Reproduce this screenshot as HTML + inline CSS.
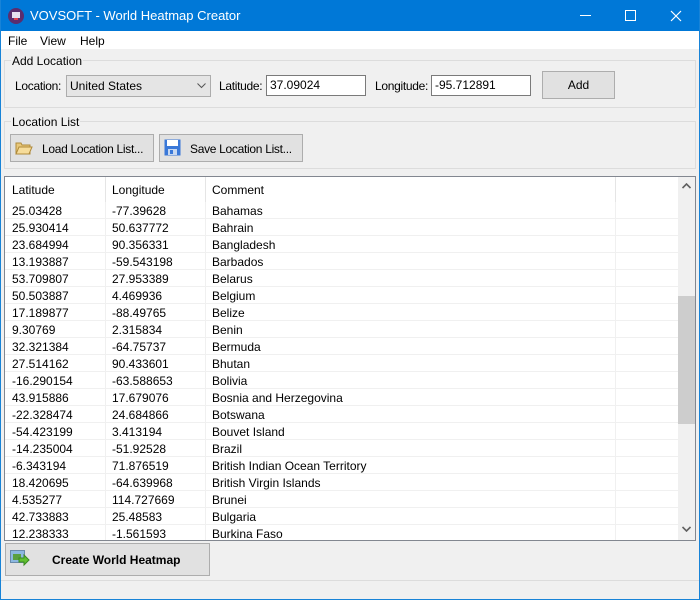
<!DOCTYPE html>
<html><head><meta charset="utf-8"><style>
*{box-sizing:border-box;margin:0;padding:0}
body{width:700px;height:600px;overflow:hidden;background:#f0f0f0;font-family:"Liberation Sans",sans-serif;font-size:12px;color:#000;position:relative}
.abs{position:absolute}
#win{position:absolute;left:0;top:0;width:700px;height:600px;border:1px solid #1883d7;border-top:none}
#title{left:0;top:0;width:700px;height:31px;background:#0078d7;color:#fff;font-size:13px}
#menu{left:1px;top:31px;width:698px;height:18px;background:#fff;font-size:12px}
.grp{border:1px solid #dcdcdc;}
.btn{background:#e1e1e1;border:1px solid #adadad;text-align:center}
.in{background:#fff;border:1px solid #7a7a7a;padding-left:3px;line-height:19px}
#list{left:4px;top:176px;width:692px;height:365px;background:#fff;border:1px solid #828790;overflow:hidden}
.row{position:absolute;left:0;height:17px;width:673px;border-bottom:1px solid #f0f0f0;line-height:18px}
.row span{position:absolute;top:0}
.c1{left:7px}.c2{left:107px}.c3{left:207px}
.vl{position:absolute;width:1px;background:#f0f0f0}
.tight{letter-spacing:-0.3px}
</style></head><body>
<div id="title" class="abs">
 <svg class="abs" style="left:8px;top:8px" width="16" height="16"><circle cx="8" cy="8" r="8" fill="#5b2d6e"/><rect x="4" y="4" width="8" height="6" fill="#e8e0f0"/><rect x="6" y="10" width="4" height="2" fill="#e04050"/></svg>
 <span class="abs" style="left:30px;top:8px">VOVSOFT - World Heatmap Creator</span>
 <div class="abs" style="left:580px;top:15px;width:11px;height:1px;background:#fff"></div>
 <div class="abs" style="left:625px;top:10px;width:11px;height:11px;border:1px solid #fff"></div>
 <svg class="abs" style="left:670px;top:10px" width="12" height="12"><path d="M1 1L11 11M11 1L1 11" stroke="#fff" stroke-width="1.2"/></svg>
</div>
<div id="menu" class="abs"><span class="abs" style="left:7px;top:3px">File</span><span class="abs" style="left:39px;top:3px">View</span><span class="abs" style="left:79px;top:3px">Help</span></div>

<div class="abs grp" style="left:4px;top:60px;width:692px;height:48px"></div>
<span class="abs" style="left:11px;top:54px;background:#f0f0f0;padding:0 1px">Add Location</span>
<span class="abs tight" style="left:15px;top:79px">Location:</span>
<div class="abs" style="left:66px;top:75px;width:145px;height:22px;background:#e5e5e5;border:1px solid #acacac;line-height:20px;padding-left:3px">United States
 <svg class="abs" style="left:130px;top:7px" width="9" height="6"><path d="M0.5 0.5L4.5 4.5L8.5 0.5" stroke="#555" fill="none"/></svg></div>
<span class="abs tight" style="left:219px;top:79px">Latitude:</span>
<div class="abs in" style="left:266px;top:75px;width:100px;height:21px">37.09024</div>
<span class="abs tight" style="left:375px;top:79px">Longitude:</span>
<div class="abs in" style="left:431px;top:75px;width:100px;height:21px">-95.712891</div>
<div class="abs btn" style="left:542px;top:71px;width:73px;height:28px;line-height:26px">Add</div>

<div class="abs grp" style="left:4px;top:121px;width:692px;height:48px"></div>
<span class="abs" style="left:11px;top:115px;background:#f0f0f0;padding:0 1px">Location List</span>
<div class="abs btn" style="left:10px;top:134px;width:144px;height:28px"></div>
<svg class="abs" style="left:15px;top:140px" width="18" height="15"><path d="M1 3h5l1 2h8v9H1z" fill="#e8c87a" stroke="#b08a3a"/><path d="M1 14l3-7h13l-3 7z" fill="#f6dc9a" stroke="#b08a3a"/></svg>
<span class="abs tight" style="left:42px;top:142px">Load Location List...</span>
<div class="abs btn" style="left:159px;top:134px;width:144px;height:28px"></div>
<svg class="abs" style="left:164px;top:139px" width="17" height="17"><rect x="0.5" y="0.5" width="16" height="16" fill="#3a78d8"/><rect x="3" y="1" width="11" height="6" fill="#fff"/><rect x="4" y="10" width="9" height="6" fill="#c8d8f0"/><rect x="6" y="11" width="3" height="4" fill="#3a78d8"/></svg>
<span class="abs tight" style="left:190px;top:142px">Save Location List...</span>

<div id="list" class="abs">
 <div class="abs" style="left:0;top:0;width:673px;height:25px;background:#fff;line-height:26px">
  <span class="abs" style="left:7px">Latitude</span><span class="abs" style="left:107px">Longitude</span><span class="abs" style="left:207px">Comment</span>
  <div class="vl" style="left:100px;top:0;height:25px;background:#e5e5e5"></div>
  <div class="vl" style="left:200px;top:0;height:25px;background:#e5e5e5"></div>
  <div class="vl" style="left:610px;top:0;height:25px;background:#e5e5e5"></div>
 </div>
 <div class="vl" style="left:100px;top:25px;height:340px"></div>
 <div class="vl" style="left:200px;top:25px;height:340px"></div>
 <div class="vl" style="left:610px;top:25px;height:340px"></div>
 <div class="row" style="top:25px"><span class="c1">25.03428</span><span class="c2">-77.39628</span><span class="c3">Bahamas</span></div>
 <div class="row" style="top:42px"><span class="c1">25.930414</span><span class="c2">50.637772</span><span class="c3">Bahrain</span></div>
 <div class="row" style="top:59px"><span class="c1">23.684994</span><span class="c2">90.356331</span><span class="c3">Bangladesh</span></div>
 <div class="row" style="top:76px"><span class="c1">13.193887</span><span class="c2">-59.543198</span><span class="c3">Barbados</span></div>
 <div class="row" style="top:93px"><span class="c1">53.709807</span><span class="c2">27.953389</span><span class="c3">Belarus</span></div>
 <div class="row" style="top:110px"><span class="c1">50.503887</span><span class="c2">4.469936</span><span class="c3">Belgium</span></div>
 <div class="row" style="top:127px"><span class="c1">17.189877</span><span class="c2">-88.49765</span><span class="c3">Belize</span></div>
 <div class="row" style="top:144px"><span class="c1">9.30769</span><span class="c2">2.315834</span><span class="c3">Benin</span></div>
 <div class="row" style="top:161px"><span class="c1">32.321384</span><span class="c2">-64.75737</span><span class="c3">Bermuda</span></div>
 <div class="row" style="top:178px"><span class="c1">27.514162</span><span class="c2">90.433601</span><span class="c3">Bhutan</span></div>
 <div class="row" style="top:195px"><span class="c1">-16.290154</span><span class="c2">-63.588653</span><span class="c3">Bolivia</span></div>
 <div class="row" style="top:212px"><span class="c1">43.915886</span><span class="c2">17.679076</span><span class="c3">Bosnia and Herzegovina</span></div>
 <div class="row" style="top:229px"><span class="c1">-22.328474</span><span class="c2">24.684866</span><span class="c3">Botswana</span></div>
 <div class="row" style="top:246px"><span class="c1">-54.423199</span><span class="c2">3.413194</span><span class="c3">Bouvet Island</span></div>
 <div class="row" style="top:263px"><span class="c1">-14.235004</span><span class="c2">-51.92528</span><span class="c3">Brazil</span></div>
 <div class="row" style="top:280px"><span class="c1">-6.343194</span><span class="c2">71.876519</span><span class="c3">British Indian Ocean Territory</span></div>
 <div class="row" style="top:297px"><span class="c1">18.420695</span><span class="c2">-64.639968</span><span class="c3">British Virgin Islands</span></div>
 <div class="row" style="top:314px"><span class="c1">4.535277</span><span class="c2">114.727669</span><span class="c3">Brunei</span></div>
 <div class="row" style="top:331px"><span class="c1">42.733883</span><span class="c2">25.48583</span><span class="c3">Bulgaria</span></div>
 <div class="row" style="top:348px"><span class="c1">12.238333</span><span class="c2">-1.561593</span><span class="c3">Burkina Faso</span></div>
 <div class="abs" style="left:673px;top:0;width:17px;height:363px;background:#f0f0f0"></div>
 <div class="abs" style="left:673px;top:119px;width:17px;height:128px;background:#cdcdcd"></div>
 <svg class="abs" style="left:677px;top:6px" width="9" height="6"><path d="M0.5 5L4.5 1L8.5 5" stroke="#606060" stroke-width="1.6" fill="none"/></svg>
 <svg class="abs" style="left:677px;top:349px" width="9" height="6"><path d="M0.5 1L4.5 5L8.5 1" stroke="#606060" stroke-width="1.6" fill="none"/></svg>
</div>

<div class="abs btn" style="left:5px;top:543px;width:205px;height:33px"></div>
<svg class="abs" style="left:10px;top:550px" width="20" height="18"><rect x="0.5" y="0.5" width="14" height="12" fill="#8cb8e0" stroke="#6a8aaa"/><rect x="3" y="4" width="8" height="6" fill="#5aa040"/><path d="M9 8h5V5l5 5-5 5v-3H9z" fill="#60c030" stroke="#3a8a20"/></svg>
<span class="abs" style="left:52px;top:553px;font-weight:bold">Create World Heatmap</span>
<div class="abs" style="left:1px;top:580px;width:698px;height:1px;background:#dcdcdc"></div>
<div id="win"></div>
</body></html>
